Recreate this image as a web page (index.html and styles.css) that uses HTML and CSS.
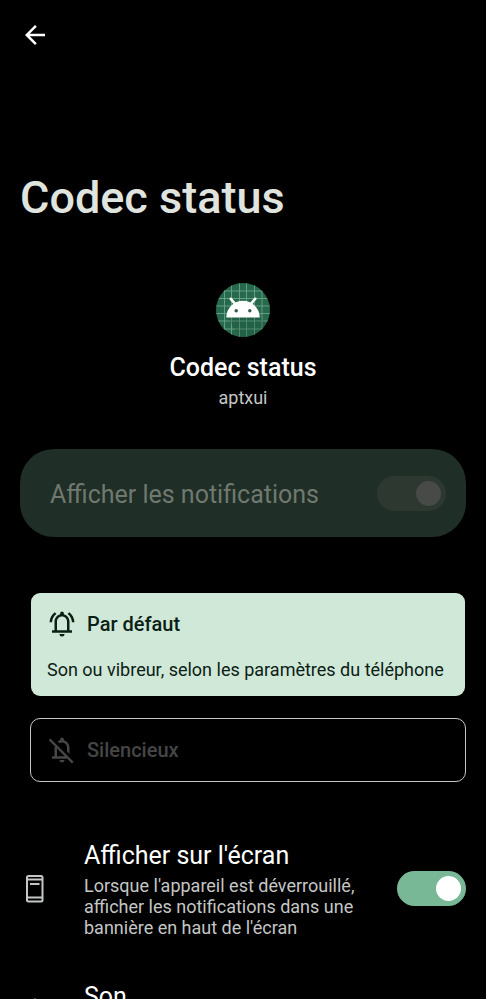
FILE: index.html
```html
<!DOCTYPE html>
<html lang="fr">
<head>
<meta charset="utf-8">
<meta name="viewport" content="width=device-width, initial-scale=1">
<title>Codec status</title>
<link rel="stylesheet" href="styles.css">
</head>
<body>
<main class="screen">
  <header class="header">
    <button class="back" type="button" aria-label="Retour">
      <svg viewBox="0 0 24 24" width="30" height="30" fill="currentColor"><path d="M20 11H7.830l5.590-5.590L12 4l-8 8 8 8 1.410-1.410L7.830 13H20z"/></svg>
    </button>
    <h1 class="title">Codec status</h1>
  </header>

  <section class="app">
    <svg class="app-icon" viewBox="0 0 54 54" width="54" height="54">
      <clipPath id="disc"><circle cx="27" cy="27" r="27"/></clipPath>
      <g clip-path="url(#disc)">
        <rect width="54" height="54" fill="#27694c"/>
        <path d="M8.500 0V54M15.500 0V54M23.500 0V54M30.500 0V54M38.500 0V54M46 0V54M0 8H54M0 15.500H54M0 23H54M0 30.500H54M0 38H54M0 46H54" stroke="#6aa388" stroke-width="0.900" fill="none"/>
        <path d="M44 34l10 10v10H24L11 34z" fill="#174d36" opacity="0.250"/>
      </g>
      <path d="M14.800 15.800l4.500 5.400M39.200 15.800l-4.500 5.400" stroke="#fff" stroke-width="2.600" stroke-linecap="round"/>
      <path d="M10.300 34.500a16.700 16.700 0 0 1 33.400 0z" fill="#fff"/>
      <circle cx="20.200" cy="27.800" r="1.700" fill="#35574a"/><circle cx="33.800" cy="27.800" r="1.700" fill="#35574a"/>
    </svg>
    <h2 class="app-name">Codec status</h2>
    <p class="app-package">aptxui</p>
  </section>

  <label class="main-switch">
    <span>Afficher les notifications</span>
    <input class="switch" type="checkbox" role="switch" checked disabled>
  </label>

  <fieldset class="choices">
    <label class="choice choice-on">
      <input class="choice-input" type="radio" name="importance" checked>
      <span class="choice-head">
        <svg viewBox="0 0 24 24" width="30" height="30" fill="currentColor"><path d="M4 17v2h16v-2h-2v-7c0-2.790-1.910-5.140-4.500-5.800V3.500a1.500 1.500 0 0 0-3 0v.7C7.900 4.860 6 7.210 6 10v7zm4 0v-7c0-2.210 1.790-4 4-4s4 1.790 4 4v7zM10 20a2 2 0 0 0 4 0zM7.580 4.080L6.150 2.650C3.750 4.480 2.170 7.300 2.030 10.500h2c.15-2.650 1.510-4.970 3.550-6.420zM19.970 10.500h2c-.15-3.200-1.730-6.020-4.120-7.850l-1.420 1.430c2.020 1.450 3.390 3.770 3.540 6.420z"/></svg>
        <span>Par défaut</span>
      </span>
      <span class="choice-text">Son ou vibreur, selon les paramètres du téléphone</span>
    </label>
    <label class="choice choice-off">
      <input class="choice-input" type="radio" name="importance">
      <span class="choice-head">
        <svg viewBox="0 0 24 24" width="30" height="30" fill="currentColor"><path d="M12 22c1.100 0 2-.9 2-2h-4c0 1.100.9 2 2 2zM12 6c2.210 0 4 1.790 4 4v3.200l2 2V10c0-2.790-1.910-5.140-4.500-5.800V3.500a1.500 1.500 0 0 0-3 0v.7c-.7.180-1.350.480-1.940.860L10 6.520A4 4 0 0 1 12 6zM2.700 2.700L1.300 4.100l5.350 5.350C6.580 9.630 6 9.810 6 10v7H4v2h12.200l3.700 3.700 1.400-1.400zM8 17v-6.200l6.200 6.200z"/></svg>
        <span>Silencieux</span>
      </span>
    </label>
  </fieldset>

  <label class="row">
    <svg class="row-icon" viewBox="0 0 30 30" width="30" height="30" fill="none" stroke="currentColor" stroke-width="2">
      <rect x="7" y="2" width="15.500" height="25.500" rx="1.500"/>
      <path d="M7 5.500h15M7 23.500h15M10 10h9.500"/>
    </svg>
    <span class="row-body">
      <span class="row-title">Afficher sur l'écran</span>
      <span class="row-text">Lorsque l'appareil est déverrouillé, afficher les notifications dans une bannière en haut de l'écran</span>
    </span>
    <input class="switch" type="checkbox" role="switch" checked>
  </label>

  <a class="row row-next" href="#son">
    <svg class="row-icon" viewBox="0 0 24 24" width="30" height="30" fill="currentColor"><path d="M4 17v2h16v-2h-2v-7c0-2.790-1.910-5.140-4.500-5.800V3.500a1.500 1.500 0 0 0-3 0v.7C7.900 4.860 6 7.210 6 10v7zm4 0v-7c0-2.210 1.790-4 4-4s4 1.790 4 4v7zM10 20a2 2 0 0 0 4 0z"/></svg>
    <span class="row-body">
      <span class="row-title">Son</span>
    </span>
  </a>
</main>
</body>
</html>
```
FILE: styles.css
```css
* {
  box-sizing: border-box;
}

body {
  margin: 0;
  background: #000;
  color: #fff;
  font-family: Roboto, "Noto Sans", sans-serif;
}

h1, h2, p {
  margin: 0;
}

svg {
  display: block;
  flex: none;
}

.screen {
  display: flex;
  flex-direction: column;
  height: 100vh;
  padding: 20px 20px 0;
  overflow-y: auto;
  scrollbar-width: none;
}

.screen > * {
  flex: none;
}

.header {
  display: flex;
  flex-direction: column;
  align-items: flex-start;
  gap: 122px;
}

.back {
  padding: 0;
  border: 0;
  background: none;
  color: #fff;
}

.title {
  color: #e0e4df;
  font-size: 45px;
  font-weight: 500;
  line-height: 52px;
}

.app {
  display: flex;
  flex-direction: column;
  align-items: center;
  margin-top: 59px;
}

.app-name {
  margin-top: 16px;
  font-size: 25px;
  font-weight: 500;
  line-height: 30px;
}

.app-package {
  margin-top: 4px;
  color: #c4c7c5;
  font-size: 18px;
  line-height: 22px;
}

.main-switch {
  display: flex;
  align-items: center;
  justify-content: space-between;
  min-height: 88px;
  margin-top: 40px;
  padding: 0 20px 0 30px;
  border-radius: 34px;
  background: #1f2e26;
  color: #70796f;
  font-size: 25px;
}

.main-switch span {
  padding-top: 3px;
  line-height: 33px;
}

.switch {
  display: flex;
  flex: none;
  align-items: center;
  justify-content: flex-end;
  width: 69px;
  height: 35px;
  margin: 0;
  padding: 0 5px;
  border-radius: 18px;
  background: #78b896;
  appearance: none;
}

.switch::before {
  content: "";
  width: 25px;
  height: 25px;
  border-radius: 50%;
  background: #fff;
}

.switch:not(:checked) {
  justify-content: flex-start;
}

.switch:disabled {
  background: #2d3831;
}

.switch:disabled::before {
  background: #484a48;
}

.choices {
  display: flex;
  flex-direction: column;
  gap: 21px;
  min-width: 0;
  margin: 55px 0 0 10px;
  padding: 0;
  border: 0;
}

.choice {
  display: flex;
  position: relative;
  flex-direction: column;
  gap: 20px;
  padding: 16px;
  border: 1px solid transparent;
  border-radius: 10px;
}

.choice-input {
  position: absolute;
  margin: 0;
  opacity: 0;
}

.choice-on {
  background: #d0e8d8;
  background-clip: padding-box;
  color: #0b2015;
}

.choice-off {
  border-color: #c8c8c8;
  color: #444746;
}

.choice-head {
  display: flex;
  align-items: center;
  gap: 10px;
  font-size: 20px;
  font-weight: 500;
  line-height: 30px;
}

.choice-text {
  font-size: 18px;
  line-height: 21px;
}

.row {
  display: flex;
  align-items: center;
  margin-top: 57px;
  color: #fff;
  text-decoration: none;
}

.row-next {
  min-height: 62px;
  margin-top: 42px;
}

.row-icon {
  margin-right: 34px;
  color: #c4c7c5;
}

.row-body {
  display: flex;
  flex: 1;
  flex-direction: column;
  align-self: flex-start;
  gap: 2px;
  padding-right: 40px;
}

.row-title {
  font-size: 25px;
  line-height: 34px;
}

.row-text {
  color: #c4c7c5;
  font-size: 18px;
  line-height: 21px;
}
```
